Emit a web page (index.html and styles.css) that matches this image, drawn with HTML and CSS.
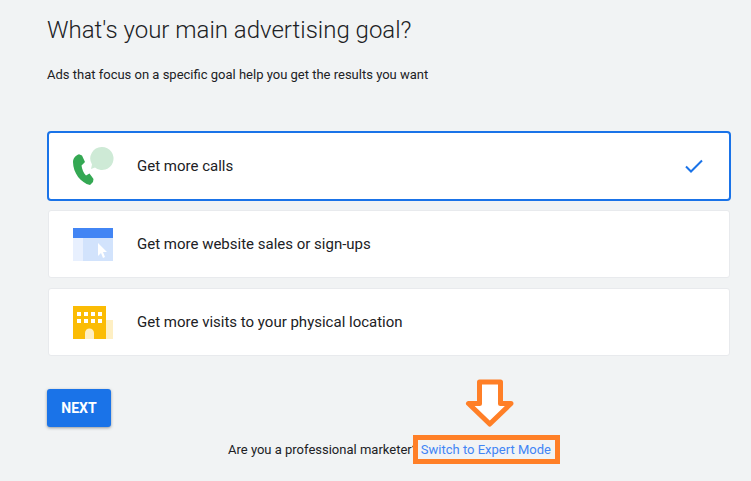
FILE: index.html
```html
<!DOCTYPE html>
<html lang="en">
<head>
<meta charset="utf-8">
<title>Advertising goal</title>
<link rel="stylesheet" href="styles.css">
</head>
<body>
<main class="page">
  <h1 class="title">What's your main advertising goal?</h1>
  <p class="subtitle">Ads that focus on a specific goal help you get the results you want</p>
  <div class="goals">
    <div class="goal goal-selected">
      <svg class="goal-icon" width="42" height="38" viewBox="0 0 42 38">
        <path fill="#ceead6" d="M29 0a11.500 11.500 0 1 1-7 20.600l-4 1.400 1-4.500A11.500 11.500 0 0 1 29 0z"/>
        <path fill="#34a853" d="M6 7.300 9 8.500 12 15 8.500 18.500C9 22 10.500 26 13 28.500L16.500 26.500 20.500 32 20 35 17 38C8 36 0 26 0 15 0 11.500 2.500 8.500 6 7.300z"/>
      </svg>
      <span class="goal-label">Get more calls</span>
      <svg class="check" width="18" height="14" viewBox="0 0 18 14"><path fill="none" stroke="#1a73e8" stroke-width="2" d="M1 7.500 6 12.500 17 1.500"/></svg>
    </div>
    <div class="goal">
      <svg class="goal-icon" width="42" height="36" viewBox="0 -2 42 36">
        <rect y="0" width="40" height="33" fill="#e8f0fe"/>
        <rect x="10" y="10" width="30" height="23" fill="#d2e3fc"/>
        <rect width="40" height="10" fill="#4285f4"/>
        <path fill="#fff" d="M25 15v13l3-3 2 5 2-1-2-5h4z"/>
      </svg>
      <span class="goal-label">Get more website sales or sign-ups</span>
    </div>
    <div class="goal">
      <svg class="goal-icon" width="42" height="36" viewBox="0 -2 42 36">
        <rect x="33" y="14" width="7" height="19" fill="#feefc3"/>
        <rect width="33" height="33" fill="#fbbc04"/>
        <path fill="#fff" d="M4 6h4v4H4zM11 6h4v4h-4zM18 6h4v4h-4zM25 6h4v4h-4zM4 13h4v4H4zM11 13h4v4h-4zM18 13h4v4h-4zM25 13h4v4h-4z"/>
        <path fill="#feefc3" d="M12 33v-6a4.500 4.500 0 0 1 9 0v6z"/>
      </svg>
      <span class="goal-label">Get more visits to your physical location</span>
    </div>
  </div>
  <button class="next" type="button">NEXT</button>
  <div class="expert">
    <span>Are you a professional marketer?</span>
    <a class="expert-link" href="#">Switch to Expert Mode</a>
    <svg class="arrow" width="50" height="50" viewBox="0 0 50 50">
      <path fill="#fff" stroke="#ff7f27" stroke-width="5" stroke-linejoin="round" d="M14.500 3H35.500V24.500H46L24.750 45 3.500 24.500H14.500z"/>
    </svg>
  </div>
</main>
</body>
</html>
```

FILE: styles.css
```css
* { box-sizing: border-box; }
html, body { margin: 0; padding: 0; }
body {
  width: 751px;
  height: 481px;
  overflow: hidden;
  background: #f1f3f4;
  color: #202124;
  font-family: Roboto, "Liberation Sans", sans-serif;
}
.page { padding: 0 20px 0 47px; }
.title {
  margin: 0;
  padding-top: 15px;
  font-size: 24px;
  line-height: 30px;
  font-weight: 300;
  color: #202124;
}
.subtitle {
  margin: 20px 0 0;
  font-size: 13px;
  line-height: 20px;
  color: #202124;
}
.goals {
  margin-top: 46px;
  width: 684px;
  display: flex;
  flex-direction: column;
  gap: 10px;
}
.goal {
  height: 68px;
  margin: 0 1px;
  padding-left: 24px;
  display: flex;
  align-items: center;
  background: #fff;
  border: 1px solid #e8eaed;
  border-radius: 3px;
  font-size: 15px;
}
.goal-selected {
  height: 70px;
  margin: 0 0 -1px;
  padding-left: 24px;
  border: 2px solid #1a73e8;
  border-radius: 4px;
}
.goal-icon { flex: none; }
.goal-label { margin-left: 22px; }
.check { margin-left: auto; margin-right: 26px; }
.next {
  display: block;
  margin-top: 33px;
  width: 64px;
  height: 38px;
  padding: 0;
  border: 0;
  border-radius: 3px;
  background: #1a73e8;
  color: #fff;
  font: 700 14px Roboto, "Liberation Sans", sans-serif;
  box-shadow: 0 1px 3px rgba(60, 64, 67, .5);
}
.expert {
  position: relative;
  margin-top: 8px;
  padding-left: 181px;
  display: flex;
  align-items: center;
  font-size: 13px;
}
.expert-link {
  position: relative;
  margin-left: -5px;
  padding: 0 4px 0 3px;
  height: 29px;
  line-height: 19px;
  border: 5px solid #ff7f27;
  background: #f1f3f4;
  color: #4285f4;
  text-decoration: none;
  white-space: nowrap;
}
.arrow {
  position: absolute;
  left: 418px;
  top: -56px;
}
```
